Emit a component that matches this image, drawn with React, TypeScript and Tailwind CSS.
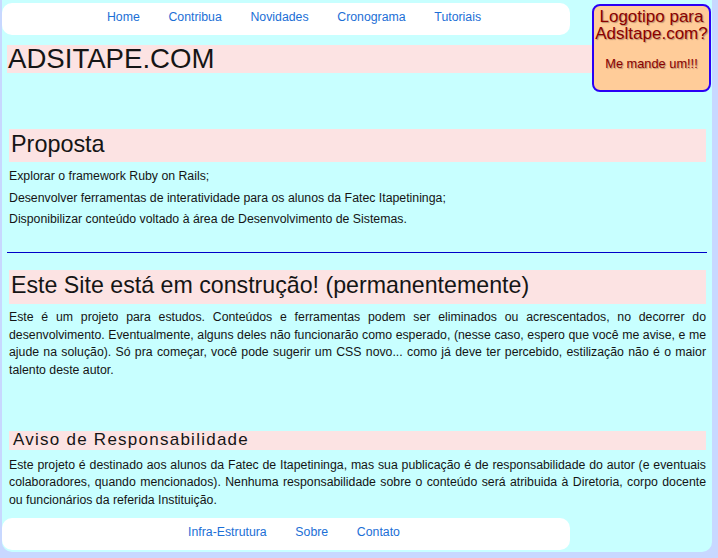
const topLinks = ["Home", "Contribua", "Novidades", "Cronograma", "Tutoriais"];
const bottomLinks = ["Infra-Estrutura", "Sobre", "Contato"];

function NavBar({ links, className = "" }: { links: string[]; className?: string }) {
  return (
    <nav
      className={
        "flex h-[32px] w-[568px] justify-center gap-[28.7px] rounded-[10px] bg-white pl-[16px] pt-[6.5px] text-[12.3px] leading-[15px] " +
        className
      }
    >
      {links.map((l) => (
        <a key={l} href="#" className="text-[#1c6fd6]">
          {l}
        </a>
      ))}
    </nav>
  );
}

export default function App() {
  return (
    <div className="h-[558px] w-full bg-[#c8d8ff] pl-[2px] font-['Liberation_Sans',Arial,sans-serif] text-[#151515]">
      <div className="flex h-[552px] w-[710px] flex-col rounded-b-[10px] bg-[#c8ffff]">
        {/* header row: nav + title, logo box floating right */}
        <div className="flex items-start">
          <div className="min-w-0 flex-1">
            <NavBar links={topLinks} className="mt-[3px]" />
            <h1 className="ml-[5px] mt-[10px] h-[27.5px] bg-[#fce3e3] pl-[1px] text-[27.6px] leading-[27.5px]">
              ADSITAPE.COM
            </h1>
          </div>
          <div className="mr-[1px] mt-[4px] h-[88px] w-[119px] rounded-[8px] border-[2.5px] border-[#2a00f5] bg-[#ffcc99] pt-[1.5px] text-center text-[#8b0000] [text-shadow:1px_1px_1px_rgba(0,0,0,0.3)]">
            <p className="text-[17px] leading-[17.3px]">
              Logotipo para
              <br />
              Adsltape.com?
            </p>
            <p className="mt-[14.4px] text-[12.8px] leading-[15px]">Me mande um!!!</p>
          </div>
        </div>

        {/* Proposta */}
        <div className="ml-[7px] mr-[6px]">
          <h2 className="mt-[37px] h-[33.4px] bg-[#fce3e3] pl-[2px] text-[23.4px] leading-[31.8px]">Proposta</h2>
          <div className="mt-[3.5px] text-[12.3px] leading-[21.8px]">
            <p>Explorar o framework Ruby on Rails;</p>
            <p>Desenvolver ferramentas de interatividade para os alunos da Fatec Itapetininga;</p>
            <p>Disponibilizar conteúdo voltado à área de Desenvolvimento de Sistemas.</p>
          </div>
        </div>

        <div className="ml-[5px] mr-[5px] mt-[21px] h-px bg-[#0000c8]" />

        {/* Em construção */}
        <div className="ml-[7px] mr-[6px]">
          <h2 className="mt-[17px] h-[33.3px] bg-[#fce3e3] pl-[2px] text-[23.2px] leading-[31.8px]">
            Este Site está em construção! (permanentemente)
          </h2>
          <p className="mt-[5.5px] text-justify text-[12.3px] leading-[17.5px]">
            Este é um projeto para estudos. Conteúdos e ferramentas podem ser eliminados ou acrescentados, no decorrer do
            desenvolvimento. Eventualmente, alguns deles não funcionarão como esperado, (nesse caso, espero que você me avise,
            e me ajude na solução). Só pra começar, você pode sugerir um CSS novo... como já deve ter percebido, estilização
            não é o maior talento deste autor.
          </p>

          {/* Aviso */}
          <h3 className="mt-[52px] h-[18.7px] bg-[#fce3e3] pl-[4px] text-[17px] leading-[18.7px] tracking-[1.25px]">
            Aviso de Responsabilidade
          </h3>
          <p className="mt-[7px] text-justify text-[12.3px] leading-[17.5px]">
            Este projeto é destinado aos alunos da Fatec de Itapetininga, mas sua publicação é de responsabilidade do autor (e
            eventuais colaboradores, quando mencionados). Nenhuma responsabilidade sobre o conteúdo será atribuida à
            Diretoria, corpo docente <span className="whitespace-nowrap">ou funcionários</span> da referida Instituição.
          </p>
        </div>

        <NavBar links={bottomLinks} className="mt-[9px]" />
      </div>
    </div>
  );
}
